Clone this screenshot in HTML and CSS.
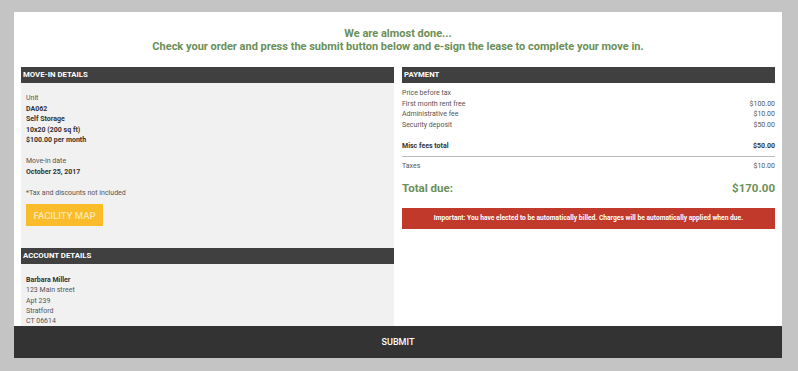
FILE: index.html
```html
<!DOCTYPE html>
<html lang="en">
<head>
    <meta charset="UTF-8">
    <meta name="viewport" content="width=device-width, initial-scale=1.0">
    <title>Review your order</title>
    <link rel="stylesheet" href="styles.css">
</head>
<body>
    <div class="page">
        <div class="intro">
            <p>We are almost done...</p>
            <p>Check your order and press the submit button below and e-sign the lease to complete your move in.</p>
        </div>

        <div class="columns">
            <div class="col col-left">
                <div class="section-title">MOVE-IN DETAILS</div>
                <div class="section-body">
                    <p>Unit<br>
                        <b>DA062</b><br>
                        <b>Self Storage</b><br>
                        <b>10x20 (200 sq ft)</b><br>
                        <b>$100.00 per month</b></p>
                    <p>Move-in date<br>
                        <b>October 25, 2017</b></p>
                    <p>*Tax and discounts not included</p>
                    <button class="map-button">FACILITY MAP</button>
                </div>
                <div class="section-title">ACCOUNT DETAILS</div>
                <div class="section-body account">
                    <p><b>Barbara Miller</b><br>
                        123 Main street<br>
                        Apt 239<br>
                        Stratford<br>
                        CT 06614</p>
                </div>
            </div>

            <div class="col col-right">
                <div class="section-title">PAYMENT</div>
                <div class="payment">
                    <div class="row"><span>Price before tax</span></div>
                    <div class="row"><span>First month rent free</span><span>$100.00</span></div>
                    <div class="row"><span>Administrative fee</span><span>$10.00</span></div>
                    <div class="row"><span>Security deposit</span><span>$50.00</span></div>
                    <div class="row subtotal"><span>Misc fees total</span><span>$50.00</span></div>
                    <div class="row taxes"><span>Taxes</span><span>$10.00</span></div>
                    <div class="row total"><span>Total due:</span><span>$170.00</span></div>
                    <div class="notice">Important: You have elected to be automatically billed. Charges will be automatically applied when due.</div>
                </div>
            </div>
        </div>

        <button class="submit-bar">SUBMIT</button>
    </div>
</body>
</html>
```

FILE: styles.css
```css
body {
    font-family: Roboto, "Liberation Sans", Arial, sans-serif;
    background: #c4c4c4;
    margin: 0;
    padding: 12px 16px 13px 14px;
    color: #555;
    font-size: 7px;
}
p {
    margin: 0;
}
b {
    color: #333;
}
.page {
    background: #fff;
    height: 346px;
    display: flex;
    flex-direction: column;
}
.intro {
    text-align: center;
    color: #6b8f58;
    font-size: 11px;
    font-weight: bold;
    line-height: 13px;
    padding: 15px 0 14px;
}
.columns {
    flex: 1;
    display: grid;
    grid-template-columns: 1fr 1fr;
    gap: 8px;
    padding: 0 7px;
    overflow: hidden;
}
.col-left {
    background: #f1f1f1;
    overflow: hidden;
}
.section-title {
    background: #404040;
    color: #fff;
    font-weight: bold;
    font-size: 7.8px;
    height: 16px;
    line-height: 16px;
    padding-left: 2px;
}
.section-body {
    padding: 10px 5px 22px;
    line-height: 10.5px;
}
.section-body p {
    margin-bottom: 10.5px;
}
.section-body p:nth-of-type(3) {
    margin-bottom: 6px;
}
.section-body.account {
    padding-top: 11px;
    line-height: 10.3px;
}
.map-button {
    background: #fbbc2c;
    color: #fde8b3;
    border: none;
    font-family: inherit;
    font-size: 9.5px;
    font-weight: 500;
    width: 77px;
    height: 22px;
    padding: 0;
    display: block;
}
.payment {
    padding-top: 5px;
    line-height: 10.6px;
}
.row {
    display: flex;
    justify-content: space-between;
}
.subtotal {
    margin-top: 10.5px;
    padding-bottom: 5px;
    border-bottom: 1px solid #bbb;
    font-weight: bold;
    color: #333;
}
.taxes {
    margin-top: 4px;
}
.total {
    margin-top: 8px;
    font-size: 11.5px;
    line-height: 16px;
    font-weight: bold;
    color: #6b8f58;
}
.notice {
    margin-top: 12px;
    background: #c0392b;
    color: #fff;
    font-weight: bold;
    font-size: 6.7px;
    height: 21px;
    line-height: 21px;
    text-align: center;
}
.submit-bar {
    height: 32px;
    background: #333;
    color: #fff;
    border: none;
    font-family: inherit;
    font-size: 9px;
    font-weight: 500;
    width: 100%;
}
```
